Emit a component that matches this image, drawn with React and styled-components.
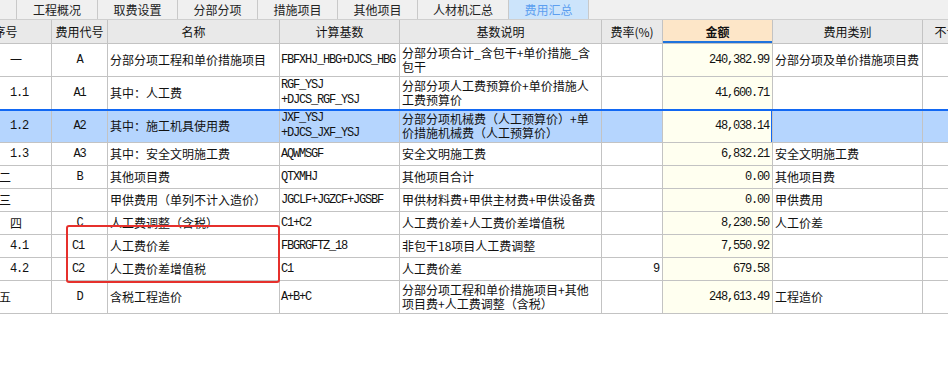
import React from 'react';
import styled, { createGlobalStyle, css } from 'styled-components';

const GlobalStyle = createGlobalStyle`
  html, body {
    margin: 0;
    padding: 0;
    background: #ffffff;
  }
  * {
    box-sizing: border-box;
  }
`;

const CJK = `"Noto Sans CJK SC", "Noto Sans", sans-serif`;
const MONO = `"Liberation Mono", "DejaVu Sans Mono", monospace`;
const GRID = '#c3c3c3';
const BLUE = '#1268f3';

const Page = styled.div`
  position: relative;
  width: 948px;
  height: 380px;
  overflow: hidden;
  background: #ffffff;
  font-family: ${CJK};
  font-size: 12px;
  color: #111;
`;

const TabBar = styled.div`
  display: flex;
  height: 20px;
  background: #f0f0f0;
  border-bottom: 1px solid #cfcfcf;
`;

const Tab = styled.div`
  width: ${({ $w }) => $w}px;
  flex: none;
  display: flex;
  align-items: center;
  justify-content: center;
  border-right: 1px solid #c9c9c9;
  font-size: 12px;
  line-height: 1;
  color: #222;
  background: #f0f0f0;

  ${({ $active }) =>
    $active &&
    css`
      background: #cce4fb;
      color: #5d9ff0;
    `}
`;

const Grid = styled.div`
  margin-left: -40px;
`;

const Row = styled.div`
  position: relative;
  display: flex;
  height: ${({ $h }) => $h}px;

  ${({ $selected }) =>
    $selected &&
    css`
      &::after {
        content: '';
        position: absolute;
        left: 0;
        right: 0;
        top: -1px;
        height: 34px;
        border-top: 2px solid ${BLUE};
        border-bottom: 2px solid ${BLUE};
        pointer-events: none;
      }
    `}
`;

const HeadCell = styled.div`
  position: relative;
  width: ${({ $w }) => $w}px;
  flex: none;
  display: flex;
  align-items: center;
  justify-content: center;
  border-right: 1px solid ${GRID};
  border-bottom: 1px solid ${GRID};
  background: ${({ $hot }) => ($hot ? '#fde6c8' : '#e9e9e9')};
  font-weight: ${({ $hot }) => ($hot ? 700 : 400)};
  white-space: nowrap;
  overflow: hidden;

  ${({ $hot }) =>
    $hot &&
    css`
      &::after {
        content: '';
        position: absolute;
        left: 0;
        right: 0;
        bottom: 0;
        height: 2px;
        background: #1f73dc;
      }
    `}
`;

const Cell = styled.div`
  position: relative;
  width: ${({ $w }) => $w}px;
  flex: none;
  display: flex;
  align-items: center;
  justify-content: ${({ $align }) =>
    $align === 'right' ? 'flex-end' : $align === 'center' ? 'center' : 'flex-start'};
  padding: 0 ${({ $pr }) => $pr ?? 2}px 0 ${({ $pl }) => $pl ?? 2}px;
  border-right: 1px solid ${GRID};
  border-bottom: 1px solid ${GRID};
  background: ${({ $amount, $selected }) =>
    $amount ? '#fffff0' : $selected ? '#b5d5fe' : '#ffffff'};
  line-height: 14px;
  overflow: hidden;
  white-space: pre-line;
  word-break: break-all;

  ${({ $mono }) =>
    $mono &&
    css`
      font-family: ${MONO};
      font-size: 12px;
      letter-spacing: -1.2px;
      line-height: 15px;
    `}

  ${({ $amount, $selected }) =>
    $amount &&
    $selected &&
    css`
      &::after {
        content: '';
        position: absolute;
        top: 0;
        bottom: 0;
        left: -2px;
        right: -1px;
        border-left: 2px solid ${BLUE};
        border-right: 2px solid ${BLUE};
      }
    `}
`;

const Annotation = styled.div`
  position: absolute;
  left: 66px;
  top: 225px;
  width: 214px;
  height: 58px;
  border: 2px solid #e6302c;
  border-radius: 3px;
  pointer-events: none;
`;

const TABS = [
  { label: '', w: 17 },
  { label: '工程概况', w: 81 },
  { label: '取费设置', w: 80 },
  { label: '分部分项', w: 80 },
  { label: '措施项目', w: 80 },
  { label: '其他项目', w: 80 },
  { label: '人材机汇总', w: 91 },
  { label: '费用汇总', w: 80, active: true },
];

const COLS = [92, 56, 172, 120, 202, 61, 110, 150, 84];

const HEADERS = ['序号', '费用代号', '名称', '计算基数', '基数说明', '费率(%)', '金额', '费用类别', '不计入合价'];

const ROWS = [
  { no: '一', ind: 50, code: 'A', name: '分部分项工程和单价措施项目', base: 'FBFXHJ_HBG+DJCS_HBG', desc: '分部分项合计_含包干+单价措施_含\n包干', amount: '240,382.99', type: '分部分项及单价措施项目费', h: 33 },
  { no: '1.1', ind: 50, mono: true, code: 'A1', name: '其中：人工费', base: 'RGF_YSJ\n+DJCS_RGF_YSJ', desc: '分部分项人工费预算价+单价措施人\n工费预算价', amount: '41,600.71', type: '', h: 33 },
  { no: '1.2', ind: 50, mono: true, code: 'A2', name: '其中：施工机具使用费', base: 'JXF_YSJ\n+DJCS_JXF_YSJ', desc: '分部分项机械费（人工预算价）+单\n价措施机械费（人工预算价）', amount: '48,038.14', type: '', h: 33, selected: true },
  { no: '1.3', ind: 50, mono: true, code: 'A3', name: '其中：安全文明施工费', base: 'AQWMSGF', desc: '安全文明施工费', amount: '6,832.21', type: '安全文明施工费', h: 23 },
  { no: '二', ind: 39, code: 'B', name: '其他项目费', base: 'QTXMHJ', desc: '其他项目合计', amount: '0.00', type: '其他项目费', h: 23 },
  { no: '三', ind: 39, code: '', name: '甲供费用（单列不计入造价）', base: 'JGCLF+JGZCF+JGSBF', desc: '甲供材料费+甲供主材费+甲供设备费', amount: '0.00', type: '甲供费用', h: 23 },
  { no: '四', ind: 50, code: 'C', name: '人工费调整（含税）', base: 'C1+C2', desc: '人工费价差+人工费价差增值税', amount: '8,230.50', type: '人工价差', h: 23 },
  { no: '4.1', ind: 50, mono: true, code: 'C1', codeLeft: true, name: '人工费价差', base: 'FBGRGFTZ_18', desc: '非包干18项目人工费调整', amount: '7,550.92', type: '', h: 23 },
  { no: '4.2', ind: 50, mono: true, code: 'C2', codeLeft: true, name: '人工费价差增值税', base: 'C1', desc: '人工费价差', rate: '9', amount: '679.58', type: '', h: 23 },
  { no: '五', ind: 39, code: 'D', name: '含税工程造价', base: 'A+B+C', desc: '分部分项工程和单价措施项目+其他\n项目费+人工费调整（含税）', amount: '248,613.49', type: '工程造价', h: 33 },
];

const App = () => {
  return (
    <Page>
      <GlobalStyle />
      <TabBar>
        {TABS.map((t, i) => (
          <Tab key={i} $w={t.w} $active={t.active}>
            {t.label}
          </Tab>
        ))}
      </TabBar>

      <Grid>
        <Row $h={24}>
          {HEADERS.map((h, i) => (
            <HeadCell key={h} $w={COLS[i]} $hot={h === '金额'}>
              {h}
            </HeadCell>
          ))}
        </Row>

        {ROWS.map((r) => (
          <Row key={r.no} $h={r.h} $selected={r.selected}>
            <Cell $w={COLS[0]} $pl={r.ind} $mono={r.mono} $selected={r.selected}>
              {r.no}
            </Cell>
            <Cell
              $w={COLS[1]}
              $align={r.codeLeft ? 'left' : 'center'}
              $pl={r.codeLeft ? 20 : 2}
              $mono
              $selected={r.selected}
            >
              {r.code}
            </Cell>
            <Cell $w={COLS[2]} $selected={r.selected}>
              {r.name}
            </Cell>
            <Cell $w={COLS[3]} $pl={1} $mono $selected={r.selected}>
              {r.base}
            </Cell>
            <Cell $w={COLS[4]} $pl={2} $selected={r.selected}>
              {r.desc}
            </Cell>
            <Cell $w={COLS[5]} $align="right" $pr={3} $mono $selected={r.selected}>
              {r.rate || ''}
            </Cell>
            <Cell $w={COLS[6]} $align="right" $pr={3} $mono $amount $selected={r.selected}>
              {r.amount}
            </Cell>
            <Cell $w={COLS[7]} $selected={r.selected}>
              {r.type}
            </Cell>
            <Cell $w={COLS[8]} $selected={r.selected} />
          </Row>
        ))}
      </Grid>

      <Annotation />
    </Page>
  );
};

export default App;
